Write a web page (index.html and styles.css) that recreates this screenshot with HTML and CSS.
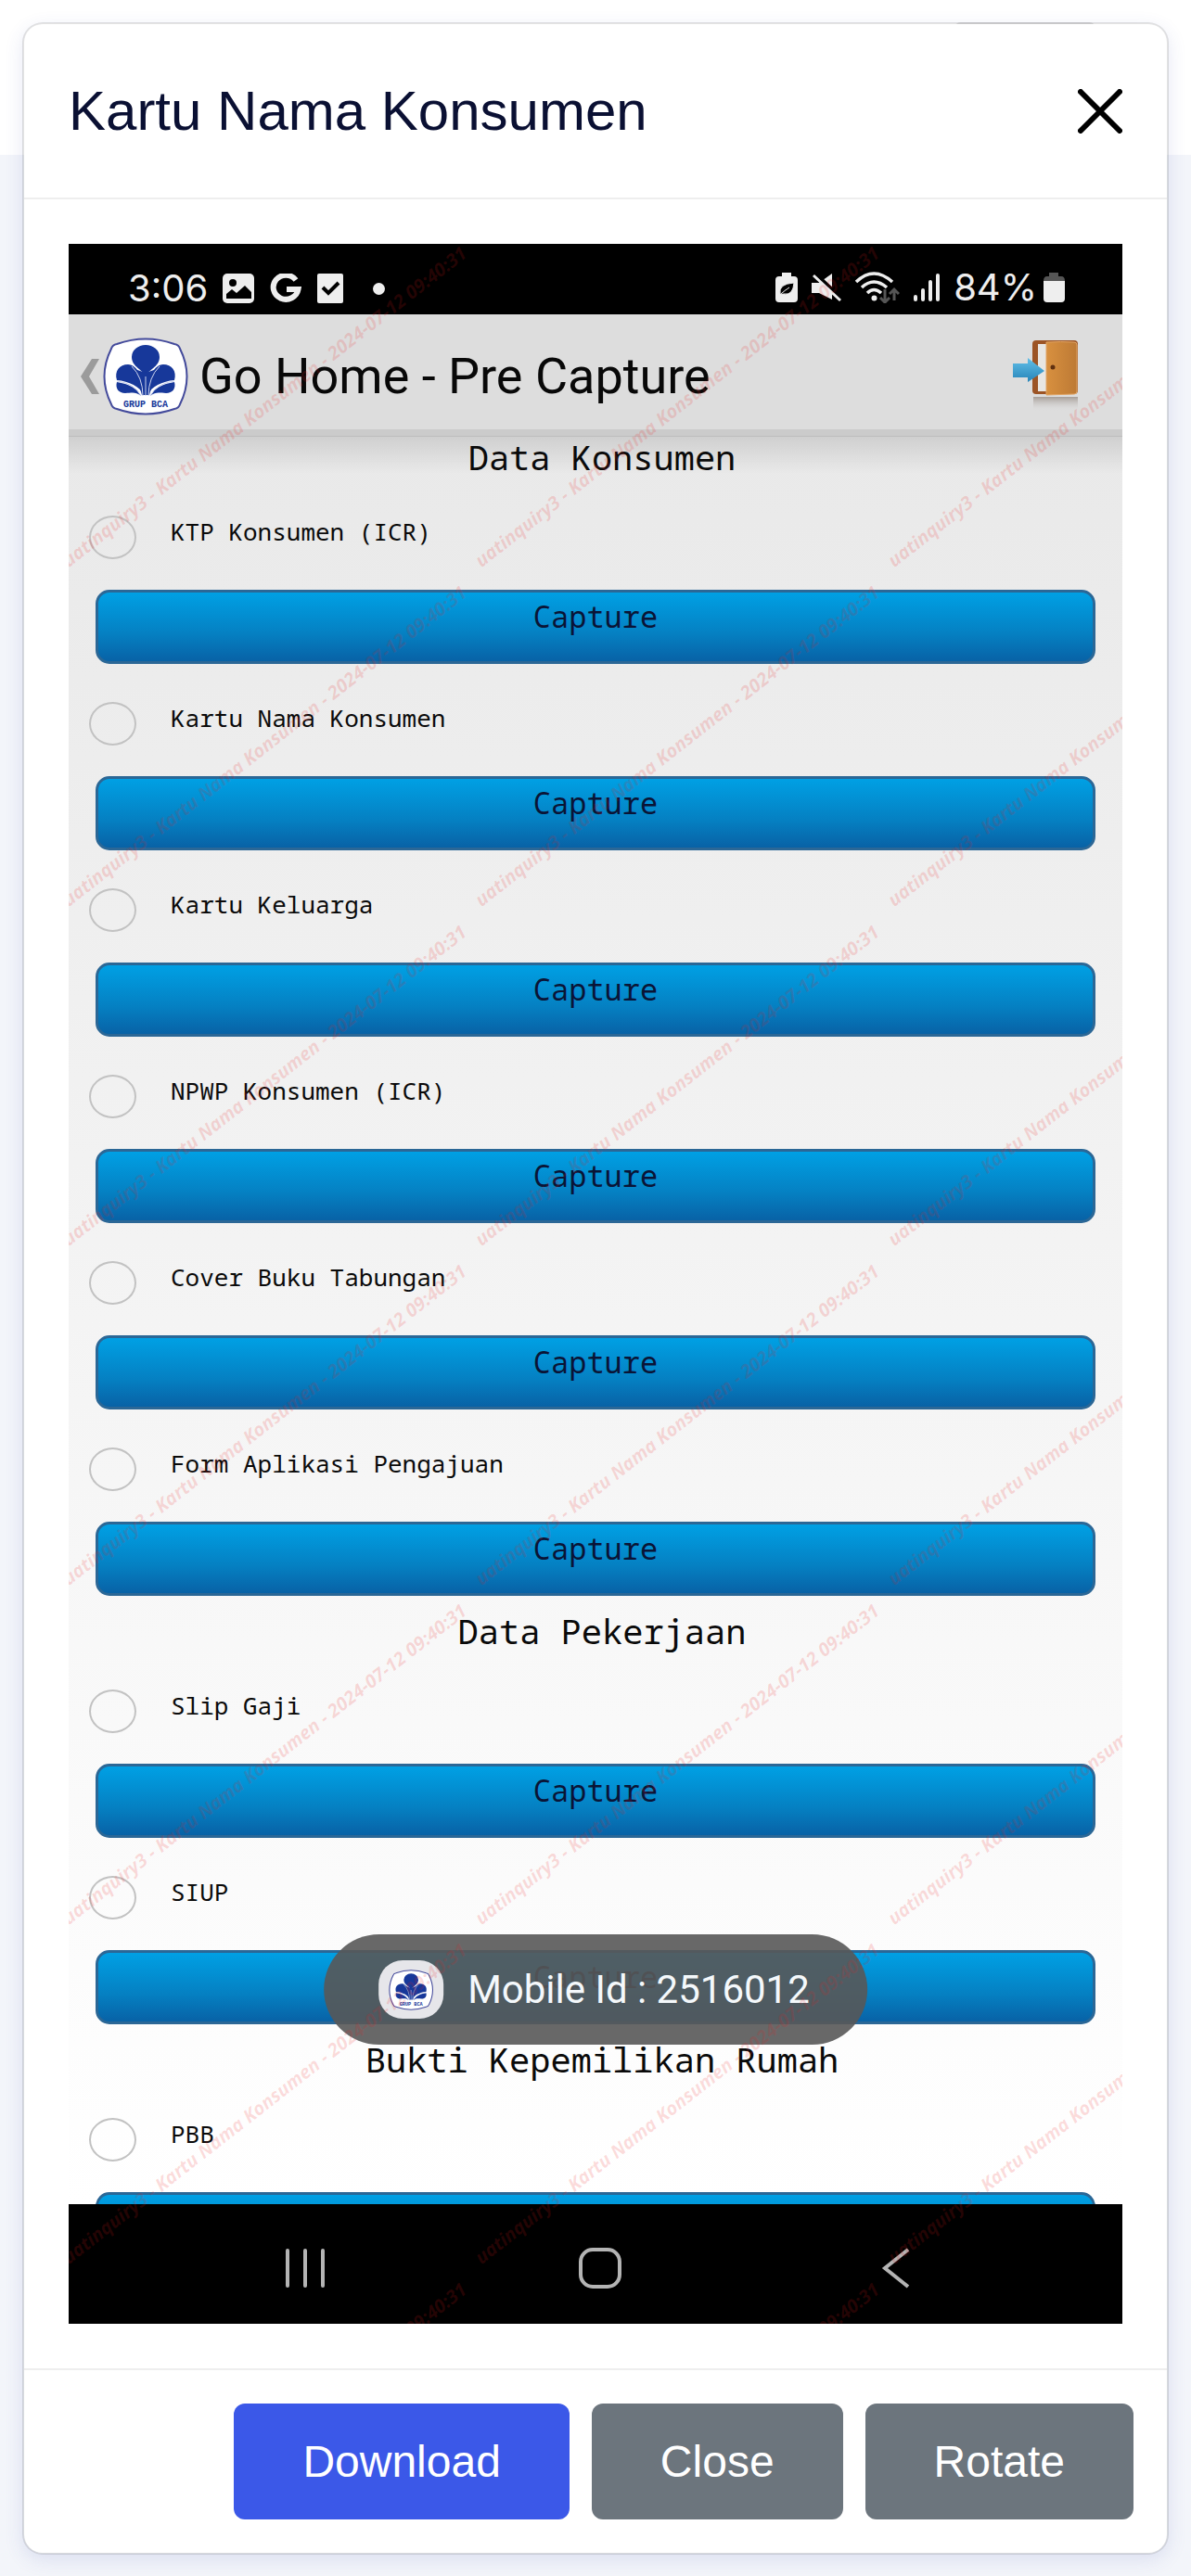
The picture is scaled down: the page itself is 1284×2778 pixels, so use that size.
FILE: index.html
```html
<!DOCTYPE html>
<html lang="id">
<head>
<meta charset="utf-8">
<meta name="viewport" content="width=device-width, initial-scale=1">
<title>Kartu Nama Konsumen</title>
<link rel="stylesheet" href="styles.css">
</head>
<body>
<svg class="defs" width="0" height="0" aria-hidden="true">
  <symbol id="logo" viewBox="0 0 92 84">
    <path d="M9 12Q10 8 15 7Q46-4 77 7Q82 8 83 12Q98 42 83 72Q82 76 77 77Q46 88 15 77Q10 76 9 72Q-6 42 9 12Z" fill="#fff" stroke="#434a9b" stroke-width="2"/>
    <g fill="#17389a">
      <path d="M46 42C44 35 31 32 31 21a15 13 0 0 1 30 0C61 32 48 35 46 42Z"/>
      <path d="M44 62C40 53 28 47 15 46C12 36 18 29 27 29C37 29 44 44 44 62Z"/>
      <path d="M48 62C52 53 64 47 77 46C80 36 74 29 65 29C55 29 48 44 48 62Z"/>
      <path d="M41 63C37 55 28 50 15 48C13 55 17 60 24 60C31 60 35 58 41 63Z"/>
      <path d="M51 63C55 55 64 50 77 48C79 55 75 60 68 60C61 60 57 58 51 63Z"/>
      <path d="M42 62L34 34L46 38L58 34L50 62Z"/>
    </g>
    <path d="M46 63V42M43 63Q43 43 31 31M49 63Q49 43 61 31M41 63Q34 49 15 47M51 63Q58 49 77 47" fill="none" stroke="#cdd4ee" stroke-width="1"/>
    <text x="46" y="75" text-anchor="middle" font-family="Liberation Mono, monospace" font-weight="700" font-size="10" fill="#17389a">GRUP BCA</text>
  </symbol>
</svg>

<div class="page-tab"></div>

<main class="modal" role="dialog" aria-labelledby="modal-title">
  <header class="modal-header">
    <h1 id="modal-title">Kartu Nama Konsumen</h1>
    <button class="icon-button" type="button" aria-label="Tutup">
      <svg width="48" height="48" viewBox="0 0 48 48" fill="none" stroke="#000" stroke-width="6" stroke-linecap="round"><path d="M3 3l42 42M45 3L3 45"/></svg>
    </button>
  </header>

  <div class="modal-body">
    <div class="phone">
      <div class="status-bar">
        <div class="status-left">
          <span class="status-text">3:06</span>
          <svg width="34" height="32" viewBox="0 0 34 32"><rect width="34" height="32" rx="5" fill="#eee"/><circle cx="11" cy="10" r="4" fill="#000"/><path d="M4 27V22l6-5 5 4 9-8 7 7v7Z" fill="#000"/></svg>
          <svg width="36" height="32" viewBox="0 0 36 32"><path d="M29 7A13.500 13 0 1 0 31.500 17H19" fill="none" stroke="#eee" stroke-width="6"/></svg>
          <svg width="28" height="32" viewBox="0 0 28 32"><rect width="28" height="32" rx="2" fill="#eee"/><path d="M6 15l6 6 11-11" fill="none" stroke="#000" stroke-width="4"/></svg>
          <span class="dot"></span>
        </div>
        <div class="status-right">
          <svg width="24" height="32" viewBox="0 0 24 32"><path d="M7 0h10v4h3q4 0 4 4v20q0 4-4 4H4q-4 0-4-4V8q0-4 4-4h3Z" fill="#eee"/><path d="M5 23Q3 12 20 11Q19 25 9 23L5 24Q10 19 15 16" fill="#000" stroke="#eee" stroke-width="1"/></svg>
          <svg width="32" height="32" viewBox="0 0 32 32"><path d="M0 11h8L22 1v28L8 22H0Z" fill="#eee"/><path d="M2 0L34 30" stroke="#000" stroke-width="5"/><path d="M2 3L31 30" stroke="#eee" stroke-width="3"/></svg>
          <svg width="48" height="34" viewBox="0 0 48 34" fill="none"><g stroke="#eee" stroke-width="3.500"><path d="M1 11Q20-7 40 11M7 17Q20 5 34 17M13 23Q20 16 28 23"/></g><circle cx="20.500" cy="28.500" r="3" fill="#eee"/><path d="M32 19v14m-5-5l5 5 5-5M42 31V19m-5 5l5-5 5 5" stroke="#555" stroke-width="3"/></svg>
          <svg width="28" height="32" viewBox="0 0 28 32" stroke="#eee" stroke-width="4" stroke-linecap="round"><path d="M2 26v3M10 19v10M18 10v19M26 3v26"/></svg>
          <span class="status-text">84%</span>
          <svg width="23" height="32" viewBox="0 0 23 32"><path d="M6 0h10v4h3q4 0 4 5H0q0-5 4-5h2Z" fill="#555"/><path d="M0 9h23v19q0 4-4 4H4q-4 0-4-4Z" fill="#eee"/></svg>
        </div>
      </div>

      <div class="app-bar">
        <button class="app-back" type="button" aria-label="Kembali">
          <svg width="20" height="38" viewBox="0 0 20 38"><path d="M12 0h8L9 19l11 19h-8L0 19Z" fill="#9b9b9b"/></svg>
          <svg width="92" height="84"><use href="#logo"/></svg>
        </button>
        <h2 class="app-title">Go Home - Pre Capture</h2>
        <button class="icon-button" type="button" aria-label="Keluar">
          <svg width="72" height="80" viewBox="0 0 72 80">
            <defs>
              <linearGradient id="door" x1="0" x2="1"><stop offset="0" stop-color="#d8903f"/><stop offset="1" stop-color="#bd7a35"/></linearGradient>
              <linearGradient id="arrow" x2="0" y2="1"><stop offset="0" stop-color="#62bfe8"/><stop offset="1" stop-color="#2684b8"/></linearGradient>
              <linearGradient id="mirror" x2="0" y2="1"><stop offset="0" stop-color="#8d8178" stop-opacity=".7"/><stop offset="1" stop-color="#ddd" stop-opacity="0"/></linearGradient>
            </defs>
            <path d="M22 62h48v15H22Z" fill="url(#mirror)"/>
            <rect x="21" y="1" width="49" height="58" rx="4" fill="#9c5425"/>
            <path d="M27 5h12v51H27Z" fill="#e8e6e2"/>
            <path d="M36 3q16-1 30 0 3 0 3 3v50q0 3-3 3l-30 1Z" fill="url(#door)" stroke="#e0a566" stroke-width="1"/>
            <circle cx="43" cy="30" r="2.500" fill="#5f3010"/>
            <path d="M0 26h16v-6l18 14-18 12v-5H0Z" fill="url(#arrow)"/>
          </svg>
        </button>
      </div>

      <form class="capture-list">
        <h3>Data Konsumen</h3>
        <div class="item"><div class="choice"><input type="radio" name="doc" id="d1"><label for="d1">KTP Konsumen (ICR)</label></div><button type="button" class="capture">Capture</button></div>
        <div class="item"><div class="choice"><input type="radio" name="doc" id="d2"><label for="d2">Kartu Nama Konsumen</label></div><button type="button" class="capture">Capture</button></div>
        <div class="item"><div class="choice"><input type="radio" name="doc" id="d3"><label for="d3">Kartu Keluarga</label></div><button type="button" class="capture">Capture</button></div>
        <div class="item"><div class="choice"><input type="radio" name="doc" id="d4"><label for="d4">NPWP Konsumen (ICR)</label></div><button type="button" class="capture">Capture</button></div>
        <div class="item"><div class="choice"><input type="radio" name="doc" id="d5"><label for="d5">Cover Buku Tabungan</label></div><button type="button" class="capture">Capture</button></div>
        <div class="item"><div class="choice"><input type="radio" name="doc" id="d6"><label for="d6">Form Aplikasi Pengajuan</label></div><button type="button" class="capture">Capture</button></div>
        <h3>Data Pekerjaan</h3>
        <div class="item"><div class="choice"><input type="radio" name="doc" id="d7"><label for="d7">Slip Gaji</label></div><button type="button" class="capture">Capture</button></div>
        <div class="item"><div class="choice"><input type="radio" name="doc" id="d8"><label for="d8">SIUP</label></div><button type="button" class="capture">Capture</button></div>
        <h3>Bukti Kepemilikan Rumah</h3>
        <div class="item"><div class="choice"><input type="radio" name="doc" id="d9"><label for="d9">PBB</label></div><button type="button" class="capture" aria-label="Capture"></button></div>
      </form>

      <nav class="nav-bar">
        <button class="icon-button" type="button" aria-label="Aplikasi terbaru"><svg width="44" height="44" viewBox="0 0 44 44" stroke="#b4b4b4" stroke-width="4" stroke-linecap="round"><path d="M3 3v38M22 3v38M41 3v38"/></svg></button>
        <button class="icon-button" type="button" aria-label="Beranda"><svg width="46" height="44" viewBox="0 0 46 44" fill="none" stroke="#b4b4b4" stroke-width="4"><rect x="2" y="2" width="42" height="40" rx="13"/></svg></button>
        <button class="icon-button" type="button" aria-label="Kembali"><svg width="44" height="44" viewBox="0 0 44 44" fill="none" stroke="#b4b4b4" stroke-width="4"><path d="M37 2L12 22l25 20"/></svg></button>
      </nav>

      <div class="toast" role="status">
        <span class="toast-logo"><svg width="50" height="44"><use href="#logo"/></svg></span>
        <span>Mobile Id : 2516012</span>
      </div>

      <div class="watermark">
        <span>uatinquiry3 - Kartu Nama Konsumen - 2024-07-12 09:40:31</span><span>uatinquiry3 - Kartu Nama Konsumen - 2024-07-12 09:40:31</span><span>uatinquiry3 - Kartu Nama Konsumen - 2024-07-12 09:40:31</span>
        <span>uatinquiry3 - Kartu Nama Konsumen - 2024-07-12 09:40:31</span><span>uatinquiry3 - Kartu Nama Konsumen - 2024-07-12 09:40:31</span><span>uatinquiry3 - Kartu Nama Konsumen - 2024-07-12 09:40:31</span>
        <span>uatinquiry3 - Kartu Nama Konsumen - 2024-07-12 09:40:31</span><span>uatinquiry3 - Kartu Nama Konsumen - 2024-07-12 09:40:31</span><span>uatinquiry3 - Kartu Nama Konsumen - 2024-07-12 09:40:31</span>
        <span>uatinquiry3 - Kartu Nama Konsumen - 2024-07-12 09:40:31</span><span>uatinquiry3 - Kartu Nama Konsumen - 2024-07-12 09:40:31</span><span>uatinquiry3 - Kartu Nama Konsumen - 2024-07-12 09:40:31</span>
        <span>uatinquiry3 - Kartu Nama Konsumen - 2024-07-12 09:40:31</span><span>uatinquiry3 - Kartu Nama Konsumen - 2024-07-12 09:40:31</span><span>uatinquiry3 - Kartu Nama Konsumen - 2024-07-12 09:40:31</span>
        <span>uatinquiry3 - Kartu Nama Konsumen - 2024-07-12 09:40:31</span><span>uatinquiry3 - Kartu Nama Konsumen - 2024-07-12 09:40:31</span><span>uatinquiry3 - Kartu Nama Konsumen - 2024-07-12 09:40:31</span>
        <span>uatinquiry3 - Kartu Nama Konsumen - 2024-07-12 09:40:31</span><span>uatinquiry3 - Kartu Nama Konsumen - 2024-07-12 09:40:31</span>
      </div>
    </div>
  </div>

  <footer class="modal-footer">
    <button class="btn btn-primary" type="button">Download</button>
    <button class="btn" type="button">Close</button>
    <button class="btn" type="button">Rotate</button>
  </footer>
</main>
</body>
</html>
```

FILE: styles.css
```css
* {
  box-sizing: border-box;
}

body {
  margin: 0;
  padding: 24px;
  min-height: 100vh;
  background: linear-gradient(#fff 167px, #f3f5fa 167px);
  font-family: "Liberation Sans", Arial, sans-serif;
}

h1, h2, h3 {
  margin: 0;
  font-weight: 400;
}

button {
  margin: 0;
  font: inherit;
  cursor: pointer;
}

svg {
  display: block;
  flex: none;
}

.defs {
  position: absolute;
}

/* Toolbar tab of the page that lies behind the dialog */
.page-tab {
  position: absolute;
  top: 24px;
  right: 102px;
  width: 154px;
  height: 60px;
  border-radius: 8px;
  background: #e2e2e2;
}

.modal {
  position: relative;
  border: 2px solid rgba(0, 0, 0, 0.11);
  border-radius: 22px;
  background: #fff;
  background-clip: padding-box;
  box-shadow: 0 6px 20px rgba(60, 70, 170, 0.12);
}

.modal-header {
  display: flex;
  align-items: center;
  justify-content: space-between;
  padding: 52px 48px 51px;
  border-bottom: 2px solid #eee;
}

.modal-header h1 {
  font-size: 60px;
  line-height: 84px;
  color: #0a1033;
}

.icon-button {
  padding: 0;
  border: 0;
  background: none;
}

.modal-body {
  padding: 48px;
}

.modal-footer {
  display: flex;
  justify-content: flex-end;
  gap: 24px;
  padding: 36px;
  border-top: 2px solid #eee;
}

.btn {
  padding: 0 74px;
  border: 0;
  border-radius: 12px;
  background: #6c757d;
  color: #fff;
  font-size: 48px;
  line-height: 125px;
}

.btn-primary {
  background: #3b58e8;
}

/* Captured phone screen */
.phone {
  position: relative;
  display: flex;
  flex-direction: column;
  aspect-ratio: 1136 / 2243;
  overflow: hidden;
  background: #000;
  font-family: Roboto, sans-serif;
}

.status-bar {
  display: flex;
  align-items: flex-end;
  justify-content: space-between;
  height: 76px;
  padding: 0 62px 12px 64px;
}

.status-left,
.status-right {
  display: flex;
  align-items: center;
  gap: 16px;
}

.status-text {
  color: #eee;
  font-family: Inter, Roboto, sans-serif;
  font-size: 40px;
  line-height: 32px;
}

.status-right {
  gap: 15px;
}

.status-right .status-text {
  margin-right: -8px;
}

.dot {
  width: 13px;
  height: 13px;
  margin-left: 16px;
  border-radius: 50%;
  background: #eee;
}

.app-bar {
  display: flex;
  align-items: center;
  gap: 12px;
  height: 131px;
  padding: 9px 46px 0 13px;
  border-bottom: 7px solid #cbcbcb;
  background: #ddd;
}

.app-back {
  display: flex;
  align-items: center;
  gap: 4px;
  padding: 0;
  border: 0;
  background: none;
}

.app-title {
  flex: 1;
  font-size: 54px;
  line-height: 60px;
  color: #080808;
}

.capture-list {
  flex: 1;
  min-height: 0;
  overflow: hidden;
  border-top: 1px solid #bdbdbd;
  background:
    linear-gradient(rgba(0, 0, 0, 0.11), rgba(0, 0, 0, 0)) top / 100% 40px no-repeat,
    linear-gradient(#e9e9e9, #fff);
  font-family: "Noto Sans Mono", "DejaVu Sans Mono", monospace;
  color: #0a0a0a;
}

.capture-list h3 {
  margin-top: 16px;
  padding-left: 14px;
  font-size: 37px;
  line-height: 44px;
  text-align: center;
}

.capture-list h3:first-of-type {
  margin-top: 0;
}

.item {
  padding: 41px 29px 0;
}

.choice {
  display: flex;
  gap: 37px;
  margin: 0 0 33px -7px;
}

.choice input {
  appearance: none;
  width: 51px;
  height: 47px;
  margin: 0;
  border: 2px solid #c2c2c2;
  border-radius: 50%;
}

.choice label {
  font-size: 26px;
  line-height: 34px;
}

.capture {
  display: block;
  width: 100%;
  height: 80px;
  padding: 0 0 22px;
  border: 3px solid #2b6796;
  border-radius: 15px;
  background: linear-gradient(#00a0e4, #0580c2 60%, #0862a6);
  color: #0a1436;
  font-size: 32px;
  line-height: 50px;
}

.nav-bar {
  display: flex;
  align-items: center;
  justify-content: space-between;
  height: 129px;
  padding: 8px 224px 0 233px;
}

.toast {
  position: absolute;
  bottom: 301px;
  left: 50%;
  display: flex;
  align-items: center;
  gap: 26px;
  padding: 28px 62px 28px 59px;
  border-radius: 60px;
  background: rgba(88, 88, 88, 0.9);
  color: #f4f8fb;
  font-size: 42px;
  line-height: 63px;
  white-space: nowrap;
  transform: translateX(-50%);
}

.toast-logo {
  display: grid;
  place-items: center;
  width: 70px;
  height: 63px;
  border-radius: 26px;
  background: #e6e6ea;
}

.watermark {
  position: absolute;
  top: 0;
  left: 13px;
  display: grid;
  grid-template-columns: repeat(3, 445px);
  grid-auto-rows: 366px;
  align-items: end;
  color: rgba(235, 30, 30, 0.16);
  font-family: "Open Sans", sans-serif;
  font-size: 20px;
  font-style: italic;
  font-weight: 700;
  line-height: 20px;
  white-space: nowrap;
  pointer-events: none;
}

.watermark span {
  padding-bottom: 18px;
  transform: rotate(-38deg);
  transform-origin: left bottom;
}
```
